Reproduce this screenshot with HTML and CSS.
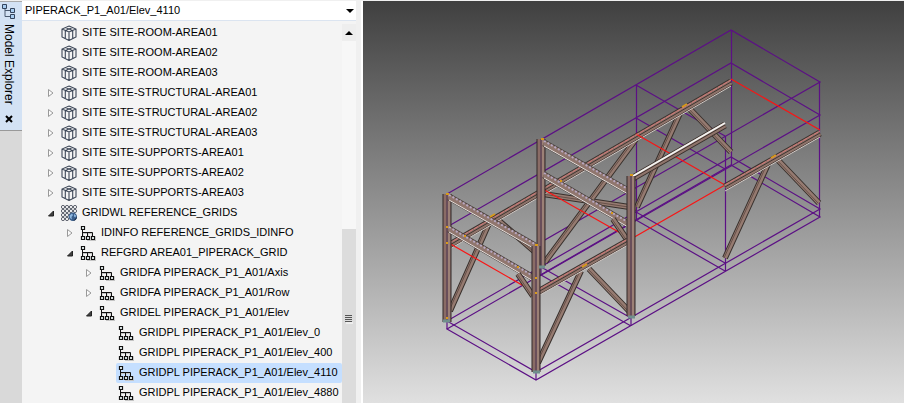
FILE: index.html
```html
<!DOCTYPE html>
<html lang="en">
<head>
<meta charset="utf-8">
<title>Model Explorer</title>
<link rel="stylesheet" href="styles.css">
</head>
<body>
<svg class="defs" aria-hidden="true">
  <symbol id="cube" viewBox="0 0 16 16">
    <path d="M8 1 15 4v8l-7 3.5L1 12V4zM1 4l7 3 7-3M8 7v8.500M4.500 2.600l7.200 3v8M11.500 2.600l-7.200 3v8" fill="none" stroke="#3c4656" stroke-width="1.100"/>
  </symbol>
  <symbol id="node" viewBox="0 0 16 16">
    <path d="M3 7v6M3 8.500h9v4M8 9v4M7 15.500h9v-4" fill="none" stroke="#c4c4c4" stroke-width="1"/>
    <path d="M2.500 5v6M3 7.500h9.500V11M7.500 8v3" fill="none" stroke="#111"/>
    <path d="M1.500 1.500h3v3h-3zM1.500 11.500h3v3h-3zM6.500 11.500h3v3h-3zM11.500 11.500h3v3h-3z" fill="#eaf5f5" stroke="#111" stroke-width="1.200"/>
  </symbol>
  <symbol id="grid" viewBox="0 0 16 16">
    <g fill="#fff" stroke="#4b505c" stroke-width=".9">
      <circle cx="2" cy="2" r="1.600"/><circle cx="6" cy="2" r="1.600"/><circle cx="10" cy="2" r="1.600"/><circle cx="14" cy="2" r="1.600"/>
      <circle cx="2" cy="6" r="1.600"/><circle cx="6" cy="6" r="1.600"/><circle cx="10" cy="6" r="1.600"/><circle cx="14" cy="6" r="1.600"/>
      <circle cx="2" cy="10" r="1.600"/><circle cx="6" cy="10" r="1.600"/><circle cx="10" cy="10" r="1.600"/>
      <circle cx="2" cy="14" r="1.600"/><circle cx="6" cy="14" r="1.600"/>
    </g>
    <circle cx="11.800" cy="11.800" r="4.200" fill="#3b5f8c"/>
    <path d="M8.500 10.500l2.500-2 1 1.500-1.500 2 .5 2.500-2-1.500zM13 9l2 1.500-.5 2-1.500-1z" fill="#8fb8df"/>
    <path d="M12 16a4.200 4.200 0 0 0 4-4.500l-2 2.500z" fill="#1d2f4a"/>
  </symbol>
  <symbol id="closed" viewBox="0 0 8 10">
    <path d="M1.500 1.500v7L6 5z" fill="#fafafa" stroke="#999"/>
  </symbol>
  <symbol id="open" viewBox="0 0 8 10">
    <path d="M6.500 3v5h-5z" fill="#404040" stroke="#222"/>
  </symbol>
</svg>
<div class="app">
  <aside class="rail">
    <div class="tab">
      <svg class="tab-icon" viewBox="0 0 16 16" aria-hidden="true">
        <path d="M4 5v8.500h5M4 7.500h5" fill="none" stroke="#4a5a70"/>
        <path d="M1.500 1.500h4v4h-4zM9.500 5.500h4v4h-4zM9.500 11.500h4v4h-4z" fill="#a9cdf0" stroke="#34445c"/>
      </svg>
      <span class="tab-label">Model Explorer</span>
      <button class="close" aria-label="Close">
        <svg viewBox="0 0 8 8"><path d="M1 1l6 6M7 1 1 7" stroke="#000" stroke-width="2"/></svg>
      </button>
    </div>
  </aside>
  <section class="explorer">
    <div class="picker">
      <select aria-label="Current element"><option>PIPERACK_P1_A01/Elev_4110</option></select>
      <svg class="caret" viewBox="0 0 8 4" aria-hidden="true"><path d="M0 0h8L4 4z"/></svg>
    </div>
    <div class="body">
      <ul class="tree">
        <li><div class="row"><span class="toggle"></span><a class="label" href="#"><svg><use href="#cube"/></svg>SITE SITE-ROOM-AREA01</a></div></li>
        <li><div class="row"><span class="toggle"></span><a class="label" href="#"><svg><use href="#cube"/></svg>SITE SITE-ROOM-AREA02</a></div></li>
        <li><div class="row"><span class="toggle"></span><a class="label" href="#"><svg><use href="#cube"/></svg>SITE SITE-ROOM-AREA03</a></div></li>
        <li><div class="row"><button class="toggle" aria-label="Expand"><svg><use href="#closed"/></svg></button><a class="label" href="#"><svg><use href="#cube"/></svg>SITE SITE-STRUCTURAL-AREA01</a></div></li>
        <li><div class="row"><button class="toggle" aria-label="Expand"><svg><use href="#closed"/></svg></button><a class="label" href="#"><svg><use href="#cube"/></svg>SITE SITE-STRUCTURAL-AREA02</a></div></li>
        <li><div class="row"><button class="toggle" aria-label="Expand"><svg><use href="#closed"/></svg></button><a class="label" href="#"><svg><use href="#cube"/></svg>SITE SITE-STRUCTURAL-AREA03</a></div></li>
        <li><div class="row"><button class="toggle" aria-label="Expand"><svg><use href="#closed"/></svg></button><a class="label" href="#"><svg><use href="#cube"/></svg>SITE SITE-SUPPORTS-AREA01</a></div></li>
        <li><div class="row"><button class="toggle" aria-label="Expand"><svg><use href="#closed"/></svg></button><a class="label" href="#"><svg><use href="#cube"/></svg>SITE SITE-SUPPORTS-AREA02</a></div></li>
        <li><div class="row"><button class="toggle" aria-label="Expand"><svg><use href="#closed"/></svg></button><a class="label" href="#"><svg><use href="#cube"/></svg>SITE SITE-SUPPORTS-AREA03</a></div></li>
        <li><div class="row"><button class="toggle" aria-label="Collapse"><svg><use href="#open"/></svg></button><a class="label" href="#"><svg><use href="#grid"/></svg>GRIDWL REFERENCE_GRIDS</a></div>
          <ul>
            <li><div class="row"><button class="toggle" aria-label="Expand"><svg><use href="#closed"/></svg></button><a class="label" href="#"><svg><use href="#node"/></svg>IDINFO REFERENCE_GRIDS_IDINFO</a></div></li>
            <li><div class="row"><button class="toggle" aria-label="Collapse"><svg><use href="#open"/></svg></button><a class="label" href="#"><svg><use href="#node"/></svg>REFGRD AREA01_PIPERACK_GRID</a></div>
              <ul>
                <li><div class="row"><button class="toggle" aria-label="Expand"><svg><use href="#closed"/></svg></button><a class="label" href="#"><svg><use href="#node"/></svg>GRIDFA PIPERACK_P1_A01/Axis</a></div></li>
                <li><div class="row"><button class="toggle" aria-label="Expand"><svg><use href="#closed"/></svg></button><a class="label" href="#"><svg><use href="#node"/></svg>GRIDFA PIPERACK_P1_A01/Row</a></div></li>
                <li><div class="row"><button class="toggle" aria-label="Collapse"><svg><use href="#open"/></svg></button><a class="label" href="#"><svg><use href="#node"/></svg>GRIDEL PIPERACK_P1_A01/Elev</a></div>
                  <ul>
                    <li><div class="row"><span class="toggle"></span><a class="label" href="#"><svg><use href="#node"/></svg>GRIDPL PIPERACK_P1_A01/Elev_0</a></div></li>
                    <li><div class="row"><span class="toggle"></span><a class="label" href="#"><svg><use href="#node"/></svg>GRIDPL PIPERACK_P1_A01/Elev_400</a></div></li>
                    <li><div class="row"><span class="toggle"></span><a class="label selected" href="#"><svg><use href="#node"/></svg>GRIDPL PIPERACK_P1_A01/Elev_4110</a></div></li>
                    <li><div class="row"><span class="toggle"></span><a class="label" href="#"><svg><use href="#node"/></svg>GRIDPL PIPERACK_P1_A01/Elev_4880</a></div></li>
                  </ul>
                </li>
              </ul>
            </li>
          </ul>
        </li>
      </ul>
      <div class="scrollbar">
        <button class="scroll-up" aria-label="Scroll up"><svg viewBox="0 0 8 4"><path d="M0 4h8L4 0z"/></svg></button>
        <div class="track"></div>
        <div class="thumb"><svg viewBox="0 0 8 10"><path d="M0 1.500h7M0 3.500h7M0 5.500h7M0 7.500h7" stroke="#555"/><path d="M1 9h7" stroke="#fff"/></svg></div>
      </div>
    </div>
  </section>
  <main class="view">
    <svg class="scene" viewBox="363 1 541 402" preserveAspectRatio="xMinYMin slice" role="img" aria-label="Pipe rack model">
      <defs>
        <g id="frame-top"><path d="M447 194 731 30 820 82 536 245zM541 140l90 51M636 85l89 51"/></g>
      </defs>
      <!-- grid planes and verticals -->
      <g class="grid">
        <use href="#frame-top"/>
        <use href="#frame-top" y="33"/>
        <use href="#frame-top" y="127"/>
        <use href="#frame-top" y="135"/>
        <path d="M447 194v135M541 140v135M636.500 85v135M731.500 30v135M536 245v135M631 191v135M725.500 136v135M819.500 82v135"/>
      </g>
      <!-- back row braces -->
      <g class="brace">
        <path id="b1" d="M490 221 450 311M497 219l38 33M636 139 545 262M543 194l93 14M681 111l-44 96M688 107l43 45"/>
      </g>
      <g class="brace-fill"><use href="#b1"/></g>
      <g class="brace-line"><use href="#b1" x="-1"/></g>
      <!-- back row longitudinal beams -->
      <path class="beam" d="M448 246 731 82"/>
      <path class="beam-light" d="M448 250 731 86"/>
      <path class="beam-fill" d="M448 246 731 82"/>
      <path class="beam-line" d="M448 246 731 82"/>
      <!-- selected elevation plane -->
      <path class="selected-plane" d="M447 242l89 51M541 188l90 51M636 134l89 51M731 79l89 51M631 239l94-54"/>
      <path class="axis" d="M448 244 731 80"/>
      <!-- back columns -->
      <g class="column"><path id="c1" d="M447 194v128M541 139v127"/></g>
      <g class="column-fill"><use href="#c1"/></g>
      <g class="column-light"><use href="#c1" x="2"/></g>
      <g class="column-line"><use href="#c1"/></g>
      <!-- transverse beams -->
      <g class="cross"><path id="t1" d="M449 197l86 49M449 229l86 50M544 143l84 48M544 175l84 49"/></g>
      <g class="cross-fill"><use href="#t1"/></g>
      <g class="cross-light"><use href="#t1" y="3"/></g>
      <g class="cross-teeth"><use href="#t1" y="-2"/></g>
      <!-- front braces -->
      <g class="brace"><path id="b2" d="M581 271 538 363M589 269l40 42M518 274l15 22M613 219l15 22M769 162l-44 96M777 159l42 44"/></g>
      <g class="brace-fill"><use href="#b2"/></g>
      <g class="brace-line"><use href="#b2" x="-1"/></g>
      <!-- front beams -->
      <g class="beam"><path id="l2" d="M538 292l90-51M725 187l95-54"/></g>
      <g class="beam-light"><use href="#l2" y="4"/></g>
      <g class="beam-fill"><use href="#l2"/></g>
      <g class="beam-line"><use href="#l2"/></g>
      <g class="axis"><use href="#l2" y="-2"/></g>
      <path class="beam" d="M633 178l92-53"/>
      <path class="beam-fill" d="M633 178l92-53"/>
      <path class="beam-line" d="M633 178l92-53"/>
      <path class="beam-white" d="M633 176l92-53"/>
      <!-- front columns -->
      <g class="column"><path id="c2" d="M536 246v126M631 176v140"/></g>
      <g class="column-fill"><use href="#c2"/></g>
      <g class="column-light"><use href="#c2" x="2"/></g>
      <g class="column-line"><use href="#c2"/></g>
      <!-- joints -->
      <g class="joint"><path d="M446 194h3M541 139h3M535 245h3M630 175h3M490 217l5-3M582 267l5-3M682 107l5-3M771 158l5-3M446 227h2M446 243h2M560 181h2M611 213h2M517 267h2M464 236h2M535 278h2M535 293h2M446 318h2"/></g>
      <g class="foot"><path d="M443 321h7M539 267h6M533 372h7M628 317h7"/></g>
    </svg>
  </main>
</div>
</body>
</html>
```
FILE: styles.css
```css
* { box-sizing: border-box; }

body {
  margin: 0;
  background: #f0f0f0;
  color: #000;
  font-family: "Liberation Sans", Arial, sans-serif;
  font-size: 11px;
}

button {
  margin: 0;
  padding: 0;
  border: 0;
  background: none;
}

svg { display: block; }

.defs { display: none; }

.app {
  display: grid;
  grid-template-columns: 22px 334px 1fr;
  height: 100vh;
  padding-top: 1px;
  overflow: hidden;
}

/* docked tab */
.rail { background: #d9d9d9; }

.tab {
  display: flex;
  flex-direction: column;
  align-items: center;
  height: 130px;
  padding: 1px 4px 0 0;
  border-top: 1px solid #aaa;
  border-bottom: 1px solid #999;
  background: #d3e2f4;
}

.tab-icon {
  width: 16px;
  height: 16px;
}

.tab-label {
  margin-top: 5px;
  font-size: 12px;
  line-height: 16px;
  writing-mode: vertical-rl;
}

.close {
  width: 8px;
  height: 8px;
  margin-top: auto;
  margin-bottom: 7px;
}

/* explorer panel */
.explorer {
  display: flex;
  flex-direction: column;
  min-height: 0;
  background: #f4f4f4;
}

.picker {
  display: grid;
  align-items: center;
  height: 20px;
  border-bottom: 1px solid #dbe4f0;
  background: #fff;
}

.picker select,
.caret { grid-area: 1 / 1; }

.picker select {
  width: 100%;
  height: 18px;
  padding: 0 16px 2px 3px;
  border: 0;
  background: none;
  appearance: none;
  color: #000;
  font: inherit;
}

.caret {
  justify-self: end;
  width: 8px;
  height: 4px;
  margin-right: 2px;
  pointer-events: none;
}

.body {
  display: flex;
  flex: 1;
  min-height: 0;
}

.tree {
  flex: 1;
  min-width: 0;
  overflow: hidden;
  padding: 2px 0 0 23px;
}

ul {
  margin: 0;
  padding: 0;
  list-style: none;
}

.tree ul { padding-left: 19px; }

.row {
  display: flex;
  height: 20px;
}

.toggle {
  flex: none;
  width: 14px;
  height: 20px;
  padding-left: 2px;
}

.toggle svg {
  width: 8px;
  height: 10px;
}

.label {
  display: flex;
  align-items: center;
  gap: 5px;
  padding: 0 4px 2px 2px;
  border-radius: 2px;
  color: #000;
  text-decoration: none;
  white-space: nowrap;
}

.label svg {
  flex: none;
  width: 16px;
  height: 16px;
  margin-top: 2px;
}

.selected { background: #c5dfff; }

/* scrollbar */
.scrollbar {
  display: flex;
  flex-direction: column;
  width: 14px;
  padding-top: 3px;
}

.scroll-up {
  display: grid;
  place-items: center;
  height: 17px;
  background: #eee;
}

.scroll-up svg {
  width: 8px;
  height: 4px;
}

.track {
  flex: 188;
  background: #f7f7f7;
}

.thumb {
  display: grid;
  flex: 174;
  place-items: center;
  background: #dcdcdc;
}

.thumb svg {
  width: 8px;
  height: 10px;
  margin-top: 6px;
}

/* 3D view */
.view {
  min-width: 0;
  min-height: 0;
  margin-left: 5px;
  border-left: 2px solid #fff;
  background: linear-gradient(#404040, #e0e0e0);
}

.scene {
  width: 100%;
  height: 100%;
  fill: none;
}

.grid { stroke: #5c1085; stroke-width: 1.2; }
.selected-plane { stroke: #fa1414; stroke-width: 1.2; }
.axis { stroke: #d87878; stroke-width: 1; stroke-dasharray: 5 1; }

.brace { stroke: #38302c; stroke-width: 6; }
.brace-fill { stroke: #957a70; stroke-width: 4; }
.brace-line { stroke: #665049; stroke-width: 1; }

.beam { stroke: #3a302c; stroke-width: 7; }
.beam-light { stroke: #d2cac6; stroke-width: 1; }
.beam-fill { stroke: #8f746b; stroke-width: 5; }
.beam-line { stroke: #40332f; stroke-width: 1; }
.beam-white { stroke: #f4f4f2; stroke-width: 2; }

.column { stroke: #302828; stroke-width: 9; }
.column-fill { stroke: #8a6c66; stroke-width: 7; }
.column-light { stroke: #9c8076; stroke-width: 2; }
.column-line { stroke: #48304e; stroke-width: 1; }

.cross { stroke: #4a403e; stroke-width: 7; }
.cross-fill { stroke: #90766e; stroke-width: 5; }
.cross-light { stroke: #e8e2de; stroke-width: 1; }
.cross-teeth { stroke: #b8a8c2; stroke-width: 2; stroke-dasharray: 2 2; }

.joint { stroke: #d89a18; stroke-width: 2; }
.foot { stroke: #6f8f8c; stroke-width: 3; }
```
